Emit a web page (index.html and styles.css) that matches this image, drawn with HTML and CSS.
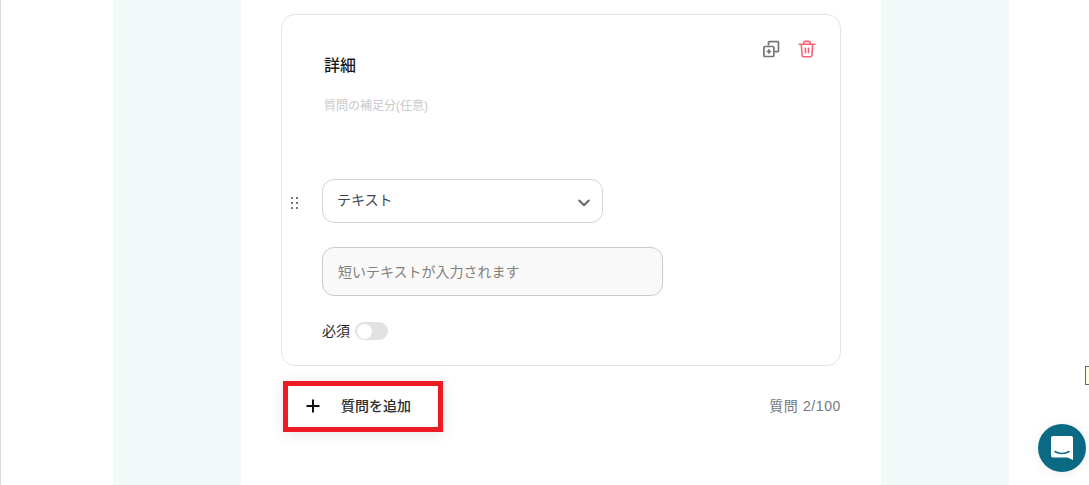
FILE: index.html
```html
<!DOCTYPE html>
<html lang="ja">
<head>
    <meta charset="UTF-8">
    <meta name="viewport" content="width=device-width, initial-scale=1.0">
    <title>フォーム編集</title>
    <link rel="stylesheet" href="styles.css">
</head>
<body>
    <div class="page">
        <div class="band">
            <div class="main">
                <!-- Question card -->
                <div class="card">
                    <div class="card-actions">
                        <button class="icon-btn" type="button" aria-label="複製">
                            <svg width="18" height="18" viewBox="0 0 18 18" fill="none" stroke="#757575" stroke-width="1.700">
                                <path d="M6.500 5.500V2.500c0-.5.400-.9.900-.9h8.200c.5 0 .9.400.9.900v8.200c0 .5-.4.900-.9.900h-3"/>
                                <rect x="1.900" y="6.500" width="10" height="10" rx="1"/>
                                <path d="M6.900 9.200v4.600M4.600 11.500h4.600"/>
                            </svg>
                        </button>
                        <button class="icon-btn" type="button" aria-label="削除">
                            <svg width="18" height="18" viewBox="0 0 18 18" fill="none" stroke="#fb5f72" stroke-width="1.600" stroke-linecap="round" stroke-linejoin="round">
                                <path d="M1.200 4.200h15.600"/>
                                <path d="M5.800 4V2.800c0-.8.600-1.400 1.400-1.400h3.600c.8 0 1.400.6 1.400 1.400V4"/>
                                <path d="M3.300 4.500l.8 11c.1.700.6 1.200 1.300 1.200h7.200c.7 0 1.200-.5 1.300-1.200l.8-11"/>
                                <path d="M7.500 8.200v4.600M10.500 8.200v4.600"/>
                            </svg>
                        </button>
                    </div>

                    <h2 class="question-title">詳細</h2>
                    <p class="question-note">質問の補足分(任意)</p>

                    <div class="type-row">
                        <span class="drag-handle">
                            <i></i><i></i><i></i><i></i><i></i><i></i>
                        </span>
                        <div class="select-box">
                            <span>テキスト</span>
                            <svg width="12" height="8" viewBox="0 0 12 8" fill="none" stroke="#666" stroke-width="2" stroke-linecap="round" stroke-linejoin="round">
                                <path d="M1.200 1.500L6 6.300l4.800-4.800"/>
                            </svg>
                        </div>
                    </div>

                    <div class="answer-box">短いテキストが入力されます</div>

                    <div class="required-row">
                        <span>必須</span>
                        <span class="toggle"><span class="toggle-knob"></span></span>
                    </div>
                </div>

                <!-- Add question -->
                <div class="card-footer">
                    <button class="add-btn" type="button">
                        <svg width="14" height="14" viewBox="0 0 14 14" stroke="#111" stroke-width="2">
                            <path d="M7 .5v13M.5 7h13"/>
                        </svg>
                        <span>質問を追加</span>
                    </button>
                    <span class="counter">質問 2/100</span>
                </div>
            </div>
        </div>
    </div>

    <!-- Overlays -->
    <div class="edge-tip"></div>
    <button class="chat-launcher" type="button" aria-label="チャット">
        <svg width="24" height="26" viewBox="0 0 24 26">
            <path d="M3 1h18a2 2 0 0 1 2 2v22l-5.500-2.500H3a2 2 0 0 1-2-2V3a2 2 0 0 1 2-2z" fill="#fff"/>
            <path d="M5 16.500c4 2.700 10 2.700 14 0" fill="none" stroke="#0b6a83" stroke-width="1.600" stroke-linecap="round"/>
        </svg>
    </button>
</body>
</html>
```

FILE: styles.css
```css
* {
    margin: 0;
    padding: 0;
    box-sizing: border-box;
}

html, body {
    height: 100%;
    overflow: hidden;
}

body {
    font-family: "Liberation Sans", "Noto Sans CJK JP", sans-serif;
    background: #fff;
    color: #1f1f1f;
}

button {
    font-family: inherit;
    background: none;
    border: none;
    cursor: pointer;
}

/* Page columns */
.page {
    height: 485px;
    padding-left: 112px;
    border-left: 1px solid #dcdcdc;
}

.band {
    width: 896px;
    height: 100%;
    padding: 0 128px;
    background: #f1faf9;
}

.main {
    height: 100%;
    padding: 14px 40px 0;
    background: #fff;
}

/* Question card */
.card {
    position: relative;
    height: 352px;
    padding: 40px 0 0 40px;
    border: 1px solid #e4e4e4;
    border-radius: 14px;
}

.card-actions {
    position: absolute;
    top: 25px;
    right: 24px;
    display: flex;
    gap: 18px;
}

.icon-btn {
    display: block;
    width: 18px;
    height: 18px;
}

.icon-btn svg {
    display: block;
}

.question-title {
    height: 22px;
    margin-left: 2px;
    font-size: 16px;
    font-weight: 500;
    line-height: 22px;
    color: #1a1a1a;
}

.question-note {
    height: 18px;
    margin: 20px 0 0 2px;
    font-size: 12px;
    line-height: 18px;
    color: #c9c9c9;
}

.type-row {
    display: flex;
    align-items: center;
    margin: 64px 0 0 -32px;
}

.drag-handle {
    display: grid;
    grid-template-columns: 2px 2px;
    gap: 3px;
    width: 32px;
    margin-top: 4px;
    padding-left: 1px;
}

.drag-handle i {
    width: 2px;
    height: 2px;
    background: #777;
}

.select-box {
    display: flex;
    align-items: center;
    justify-content: space-between;
    width: 281px;
    height: 44px;
    padding: 0 12px 0 14px;
    border: 1px solid #cfd3da;
    border-radius: 12px;
    font-size: 14px;
    color: #3d4650;
}

.select-box span {
    margin-top: -4px;
}

.select-box svg {
    margin-top: 3px;
}

.answer-box {
    width: 341px;
    height: 49px;
    margin-top: 24px;
    padding-left: 15px;
    border: 1px solid #c9cbcf;
    border-radius: 12px;
    background: #f9f9f9;
    font-size: 14px;
    line-height: 48px;
    color: #85807a;
}

.required-row {
    display: flex;
    align-items: center;
    gap: 5px;
    margin-top: 26px;
    font-size: 14px;
    line-height: 18px;
    color: #1f1f1f;
}

.toggle {
    display: block;
    width: 33px;
    height: 18px;
    padding: 1.500px;
    border-radius: 9px;
    background: #e2e2e2;
}

.toggle-knob {
    display: block;
    width: 15px;
    height: 15px;
    border-radius: 50%;
    background: #fff;
}

/* Footer row */
.card-footer {
    display: flex;
    align-items: center;
    justify-content: space-between;
    margin: 15px 0 0 2px;
}

.add-btn {
    display: flex;
    align-items: center;
    gap: 21px;
    width: 160px;
    height: 51px;
    padding-left: 18px;
    border: 5px solid #ed1c24;
    background: #fff;
    box-shadow: 0 2px 14px rgba(0, 0, 0, 0.1);
    font-size: 14px;
    font-weight: 500;
    color: #2b2b2b;
}

.add-btn svg {
    flex: none;
    margin-top: -1px;
}

.add-btn span {
    margin-top: -4px;
}

.counter {
    margin-top: -4px;
    font-size: 14px;
    letter-spacing: 0.6px;
    color: #72777f;
}

/* Overlays */
.edge-tip {
    position: absolute;
    top: 366px;
    left: 1085px;
    width: 10px;
    height: 19px;
    border: 1px solid #6b6b55;
    background: #ffffe1;
}

.chat-launcher {
    position: absolute;
    top: 424px;
    left: 1038px;
    display: flex;
    align-items: center;
    justify-content: center;
    width: 48px;
    height: 48px;
    border-radius: 50%;
    background: #0b6a83;
    box-shadow: 0 1px 12px rgba(0, 0, 0, 0.08);
}
```
